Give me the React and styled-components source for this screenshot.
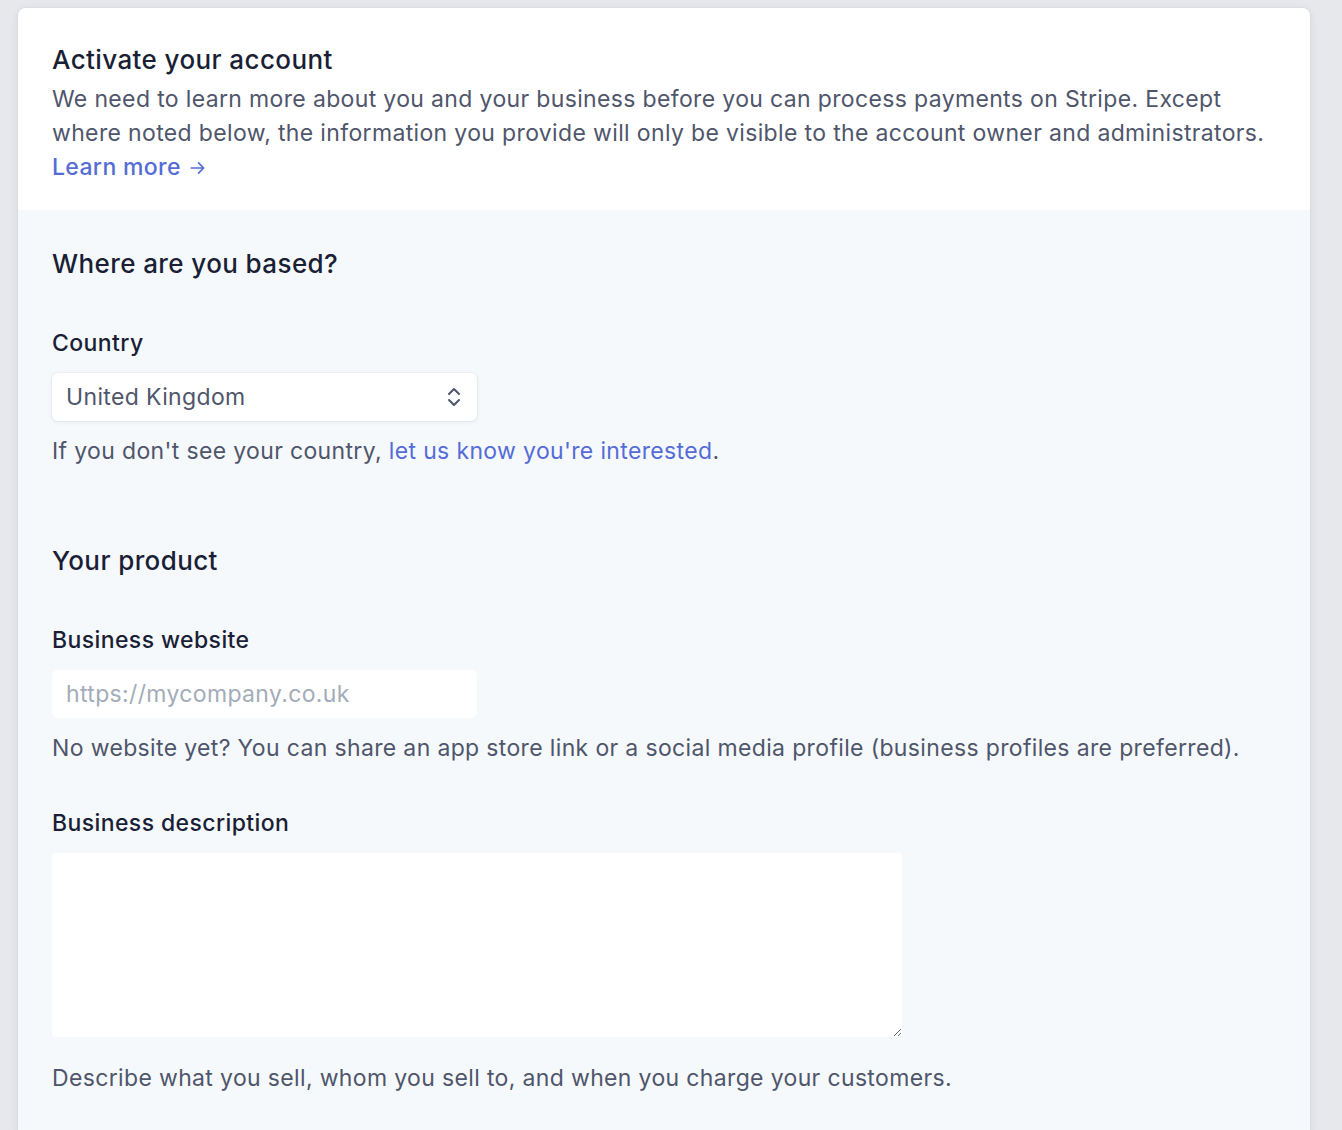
import React from "react";
import styled, { createGlobalStyle } from "styled-components";

const GlobalStyle = createGlobalStyle`
  body {
    margin: 0;
    background: #e6e8ec;
    font-family: Inter, "Noto Sans", sans-serif;
    letter-spacing: 0.35px;
    -webkit-font-smoothing: antialiased;
  }
`;

const Page = styled.div`
  padding: 8px 32px 0 18px;
  min-height: 1130px;
  box-sizing: border-box;
`;

const Card = styled.div`
  background: #f6f9fc;
  border-radius: 8px 8px 0 0;
  box-shadow: 0 0 0 1px rgba(60, 66, 87, 0.03), 0 2px 10px rgba(60, 66, 87, 0.1);
  overflow: hidden;
  min-height: 1122px;
`;

const Header = styled.header`
  background: #ffffff;
  padding: 36px 34px 26px;
`;

const Title = styled.h1`
  margin: 0;
  font-size: 26px;
  line-height: 32px;
  font-weight: 500;
  letter-spacing: 0.4px;
  color: #1a1f36;
`;

const Text = styled.p`
  margin: ${(p) => p.$mt || 0}px 0 0;
  font-size: 23px;
  line-height: 34px;
  color: #4f566b;
`;

const Link = styled.a`
  color: #556cd6;
  text-decoration: none;
  font-weight: ${(p) => (p.$strong ? 500 : 400)};
`;

const Body = styled.div`
  padding: 38px 34px 40px;
`;

const SectionTitle = styled.h2`
  margin: ${(p) => p.$mt || 0}px 0 0;
  font-size: 26px;
  line-height: 32px;
  font-weight: 500;
  letter-spacing: 0.4px;
  color: #1a1f36;
`;

const Field = styled.div`
  margin-top: ${(p) => p.$mt}px;
  display: flex;
  flex-direction: column;
  align-items: flex-start;
`;

const Label = styled.label`
  font-size: 23px;
  line-height: 32px;
  font-weight: 500;
  letter-spacing: 0.4px;
  color: #1a1f36;
  margin-bottom: 14px;
`;

const SelectBox = styled.div`
  width: 425px;
  height: 48px;
  box-sizing: border-box;
  background: #fff;
  border-radius: 6px;
  box-shadow: 0 0 0 1px rgba(60, 66, 87, 0.03), 0 1px 4px rgba(60, 66, 87, 0.1);
  display: flex;
  align-items: center;
  justify-content: space-between;
  padding: 0 16px 0 14px;
  font-size: 23px;
  color: #4f566b;
`;

const Input = styled.input`
  width: 425px;
  height: 48px;
  box-sizing: border-box;
  border: none;
  outline: none;
  background: #fff;
  border-radius: 6px;
  padding: 0 14px;
  font-family: inherit;
  letter-spacing: inherit;
  font-size: 23px;
  color: #4f566b;
  &::placeholder {
    color: #a3acb9;
  }
`;

const TextArea = styled.textarea`
  width: 850px;
  height: 184px;
  box-sizing: border-box;
  border: none;
  outline: none;
  background: #fff;
  border-radius: 4px;
  padding: 12px 14px;
  font-family: inherit;
  font-size: 23px;
  resize: both;
  display: block;
`;

const Help = styled(Text)`
  margin-top: ${(p) => p.$mt ?? 13}px;
`;

const Arrow = () => (
  <svg width="18" height="18" viewBox="0 0 16 16" style={{ verticalAlign: "-2px", marginLeft: 8 }}>
    <path d="M2 8h11M8.5 3.5 13 8l-4.5 4.5" fill="none" stroke="#556cd6" strokeWidth="1.5" strokeLinecap="round" strokeLinejoin="round" />
  </svg>
);

const Chevrons = () => (
  <svg width="14" height="22" viewBox="0 0 14 22">
    <path d="M2 8l5-5 5 5M2 14l5 5 5-5" fill="none" stroke="#4f566b" strokeWidth="2" strokeLinecap="round" strokeLinejoin="round" />
  </svg>
);

export default function App() {
  return (
    <>
      <GlobalStyle />
      <Page>
        <Card>
          <Header>
            <Title>Activate your account</Title>
            <Text $mt={6}>
              We need to learn more about you and your business before you can process payments on Stripe. Except
              where noted below, the information you provide will only be visible to the account owner and administrators.
              <br />
              <Link href="#" $strong>
                Learn more
                <Arrow />
              </Link>
            </Text>
          </Header>
          <Body>
            <SectionTitle>Where are you based?</SectionTitle>
            <Field $mt={47}>
              <Label>Country</Label>
              <SelectBox>
                <span>United Kingdom</span>
                <Chevrons />
              </SelectBox>
            </Field>
            <Help>
              If you don't see your country, <Link href="#">let us know you're interested</Link>.
            </Help>

            <SectionTitle $mt={77}>Your product</SectionTitle>
            <Field $mt={47}>
              <Label>Business website</Label>
              <Input placeholder="https://mycompany.co.uk" />
            </Field>
            <Help>
              No website yet? You can share an app store link or a social media profile (business profiles are preferred).
            </Help>
            <Field $mt={42}>
              <Label>Business description</Label>
              <TextArea />
            </Field>
            <Help $mt={24}>Describe what you sell, whom you sell to, and when you charge your customers.</Help>
          </Body>
        </Card>
      </Page>
    </>
  );
}
